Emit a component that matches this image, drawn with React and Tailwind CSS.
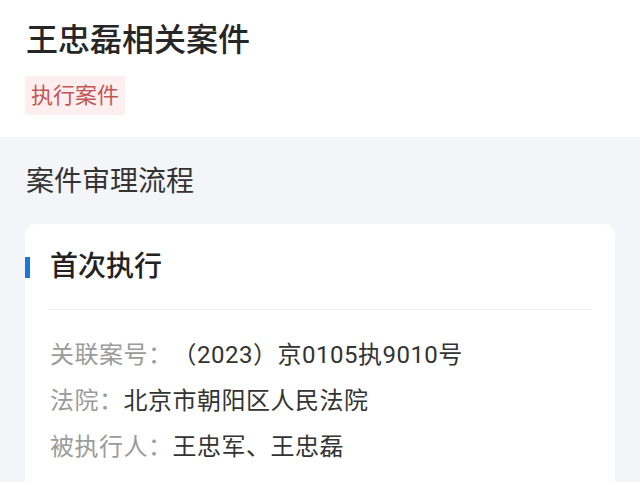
import React from 'react';

const rows = [
    { label: '关联案号：', value: '（2023）京0105执9010号' },
    { label: '法院：', value: '北京市朝阳区人民法院' },
    { label: '被执行人：', value: '王忠军、王忠磊' },
];

const App = () => {
    return (
        <div
            className="w-[640px] h-[482px] overflow-hidden bg-[#f3f5f8]"
            style={{ fontFamily: 'Roboto, "Noto Sans CJK SC", sans-serif' }}
        >
            <div className="bg-white px-[26px] pt-[20px] pb-[22px]">
                <h1 className="text-[32px] leading-[40px] font-medium text-[#262626]">王忠磊相关案件</h1>
                <div className="mt-[16px] flex">
                    <span className="bg-[#fdefef] text-[#c45555] text-[22px] leading-[39px] px-[6px] -ml-[1px]">执行案件</span>
                </div>
            </div>

            <div className="px-[25px] pt-[27px]">
                <h2 className="text-[28px] leading-[36px] text-[#333] pl-[1px]">案件审理流程</h2>

                <div className="mt-[24px] bg-white rounded-[10px] pt-[25px] pb-6">
                    <div className="flex items-center">
                        <div className="w-[5px] h-[21px] bg-[#1a78d6]"></div>
                        <div className="ml-[20px] text-[28px] leading-[36px] font-medium text-[#222]">首次执行</div>
                    </div>
                    <div className="mx-[23px] mt-[24px] h-px bg-[#f0f0f0]"></div>
                    <div className="px-[25px] pt-[22px]">
                        {rows.map((row) => (
                            <div key={row.label} className="flex text-[24px] leading-[46px] tracking-[0.5px]">
                                <span className="text-[#9b9b9b]">{row.label}</span>
                                <span className="text-[#333]">{row.value}</span>
                            </div>
                        ))}
                    </div>
                </div>
            </div>
        </div>
    );
};

export default App;
